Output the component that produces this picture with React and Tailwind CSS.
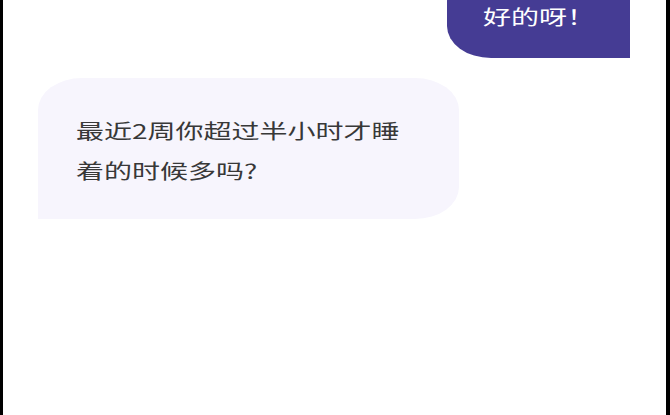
export default function App() {
  return (
    <div
      className="flex h-[415px] w-[670px] bg-black pl-[3px] pr-[4px]"
      style={{ fontFamily: '"Noto Sans CJK SC", "Noto Sans", sans-serif' }}
    >
      <div className="flex flex-1 flex-col overflow-hidden bg-white">
        {/* outgoing message */}
        <div className="mr-[36px] mt-[-30px] h-[88px] w-[183px] self-end rounded-l-[44px_32px] bg-[#453c94] pl-[36px] pt-[27px]">
          <div className="origin-left scale-x-[1.4] whitespace-nowrap text-[20px] leading-[40px] text-white">
            好的呀！
          </div>
        </div>

        {/* incoming message */}
        <div className="ml-[35px] mt-[20px] h-[141px] w-[421px] rounded-tl-[44px_32px] rounded-tr-[44px_32px] rounded-br-[44px_32px] bg-[#f7f5fd] pl-[38px] pt-[33px]">
          <div className="origin-left scale-x-[1.4] whitespace-nowrap text-[20px] leading-[40px] text-[#383838]">
            最近2周你超过半小时才睡
            <br />
            着的时候多吗?
          </div>
        </div>
      </div>
    </div>
  );
}
